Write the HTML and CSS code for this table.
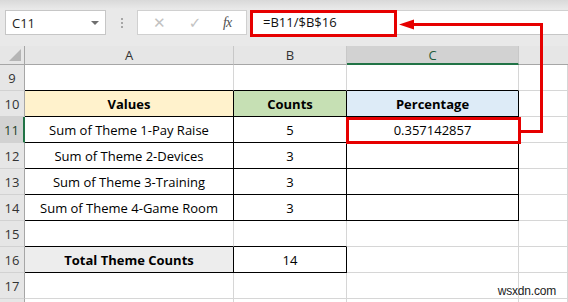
FILE: index.html
```html
<!DOCTYPE html>
<html>
<head>
<meta charset="utf-8">
<link rel="stylesheet" href="styles.css">
</head>
<body>
<div class="page">
  <div class="toolbar">
    <div class="namebox"><span>C11</span><span class="caret"></span></div>
    <div class="grip"><i></i><i></i><i></i></div>
    <div class="fxbox">
      <span class="ico x">✕</span>
      <span class="ico ok">✓</span>
      <span class="ico fx">fx</span>
    </div>
    <div class="formula">=B11/$B$16</div>
  </div>

  <div class="sheet">
    <div class="ch corner"><span class="tri"></span></div>
    <div class="ch">A</div>
    <div class="ch">B</div>
    <div class="ch sel">C</div>
    <div class="ch last"></div>

    <div class="rh">9</div>
    <div class="c bb"></div><div class="c bb"></div><div class="c bb"></div><div class="c"></div>

    <div class="rh">10</div>
    <div class="c br bb bold yel">Values</div>
    <div class="c br bb bold grn">Counts</div>
    <div class="c br bb bold blu">Percentage</div>
    <div class="c"></div>

    <div class="rh rsel">11</div>
    <div class="c br bb">Sum of Theme 1-Pay Raise</div>
    <div class="c br bb">5</div>
    <div class="c br bb">0.357142857</div>
    <div class="c"></div>

    <div class="rh">12</div>
    <div class="c br bb">Sum of Theme 2-Devices</div>
    <div class="c br bb">3</div>
    <div class="c br bb"></div>
    <div class="c"></div>

    <div class="rh">13</div>
    <div class="c br bb">Sum of Theme 3-Training</div>
    <div class="c br bb">3</div>
    <div class="c br bb"></div>
    <div class="c"></div>

    <div class="rh">14</div>
    <div class="c br bb">Sum of Theme 4-Game Room</div>
    <div class="c br bb">3</div>
    <div class="c br bb"></div>
    <div class="c"></div>

    <div class="rh">15</div>
    <div class="c bb"></div><div class="c bb"></div><div class="c"></div><div class="c"></div>

    <div class="rh">16</div>
    <div class="c br bb bold gry">Total Theme Counts</div>
    <div class="c br bb">14</div>
    <div class="c"></div>
    <div class="c"></div>

    <div class="rh">17</div>
    <div class="c"></div><div class="c"></div><div class="c"></div><div class="c"></div>

    <div class="rh"></div>
    <div class="c"></div><div class="c"></div><div class="c"></div><div class="c"></div>
  </div>

  <svg class="overlay" width="568" height="302" viewBox="0 0 568 302">
    <rect x="251.5" y="11.5" width="144" height="24" fill="none" stroke="#e60000" stroke-width="3"/>
    <rect x="347.5" y="118.5" width="172" height="24" fill="none" stroke="#e60000" stroke-width="3"/>
    <polyline points="521,131.5 541.5,131.5 541.5,24.5 412,24.5" fill="none" stroke="#e60000" stroke-width="3"/>
    <polygon points="399,24.5 414,19.5 414,29.5" fill="#e60000"/>
  </svg>
  <div class="wm">wsxdn.com</div>
</div>
</body>
</html>
```

FILE: styles.css
```css
* { box-sizing: border-box; }
html, body { margin: 0; padding: 0; }
body {
  width: 568px;
  height: 302px;
  overflow: hidden;
  font-family: "Open Sans", "Noto Sans", sans-serif;
  font-size: 13px;
  color: #000;
  background: #fff;
}
.page { position: relative; width: 568px; height: 302px; overflow: hidden; }

.toolbar {
  height: 46px;
  display: flex;
  align-items: flex-start;
  padding-top: 10px;
  background: linear-gradient(#d9d9d9 0, #e9e9e9 9px, #e9e9e9 100%);
}
.namebox {
  margin-left: 5px;
  width: 101px;
  height: 25px;
  background: #fff;
  border: 1px solid #c6c6c6;
  display: flex;
  align-items: center;
  justify-content: space-between;
  padding: 0 6px 0 6px;
  color: #222;
  font-size: 13px;
}
.caret {
  width: 0; height: 0;
  border-left: 4px solid transparent;
  border-right: 4px solid transparent;
  border-top: 4px solid #6f6f6f;
}
.grip {
  width: 31px;
  height: 25px;
  display: flex;
  flex-direction: column;
  align-items: center;
  justify-content: center;
  gap: 2px;
}
.grip i { display: block; width: 2px; height: 2px; background: #a6a6a6; }
.fxbox {
  width: 110px;
  height: 25px;
  background: #fff;
  border: 1px solid #d0d0d0;
  display: flex;
  align-items: center;
  padding-left: 14px;
}
.ico { display: inline-block; text-align: center; }
.x { width: 14px; color: #c2c2c2; font-size: 15px; font-family: "DejaVu Sans", sans-serif; font-weight: 300; }
.ok { width: 14px; margin-left: 22px; color: #c2c2c2; font-size: 15px; font-family: "DejaVu Sans", sans-serif; }
.fx { margin-left: 21px; font-family: "Liberation Serif", serif; font-style: italic; font-size: 14px; color: #505050; letter-spacing: -1px; }
.formula {
  flex: 1;
  height: 25px;
  margin-left: 4px;
  background: #fff;
  border-top: 1px solid #d0d0d0;
  border-bottom: 1px solid #c6c6c6;
  padding-left: 12px;
  line-height: 23px;
  color: #111;
}

.sheet {
  display: grid;
  grid-template-columns: 25px 209px 113px 172px 1fr;
  grid-template-rows: 19px repeat(10, 26px);
}
.ch {
  background: #e6e6e6;
  border-right: 1px solid #c8c8c8;
  border-bottom: 1px solid #a6a6a6;
  display: flex;
  align-items: center;
  justify-content: center;
  line-height: 18px;
  color: #333;
  font-size: 13px;
}
.ch.last { border-right: none; }
.ch.sel { background: #d2d2d2; border-bottom: 2px solid #217346; color: #1f5c3a; }
.corner { position: relative; border-right: 1px solid #a6a6a6; }
.tri {
  position: absolute;
  right: 3px;
  bottom: 3px;
  width: 0; height: 0;
  border-left: 12px solid transparent;
  border-bottom: 12px solid #b5b5b5;
}
.rh {
  background: #e6e6e6;
  border-right: 1px solid #a6a6a6;
  border-bottom: 1px solid #d2d2d2;
  display: flex;
  align-items: flex-end;
  justify-content: center;
  padding-bottom: 3px;
  line-height: 18px;
  color: #333;
}
.rh.rsel { background: #d2d2d2; border-right: 2px solid #217346; color: #1f3f2c; }
.c {
  border-right: 1px solid #d6d6d6;
  border-bottom: 1px solid #d6d6d6;
  display: flex;
  align-items: flex-end;
  justify-content: center;
  padding-bottom: 3px;
  line-height: 18px;
  white-space: nowrap;
}
.c.br { border-right-color: #000; }
.c.bb { border-bottom-color: #000; }
.bold { font-weight: 700; }
.yel { background: #fff2cc; }
.grn { background: #c6e0b4; }
.blu { background: #ddebf7; }
.gry { background: #ededed; }

.overlay { position: absolute; left: 0; top: 0; pointer-events: none; }
.wm {
  position: absolute;
  right: 12px;
  bottom: 4px;
  font-family: "Liberation Sans", sans-serif;
  font-size: 12px;
  color: #222;
  letter-spacing: -0.2px;
}
```
